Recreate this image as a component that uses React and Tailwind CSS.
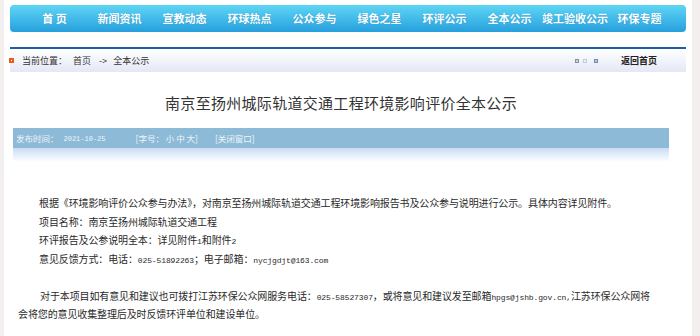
import React from "react";

const cjk = { fontFamily: '"Noto Sans CJK SC", "Noto Sans", sans-serif' };

function A({ children }) {
  return (
    <span className="font-['Liberation_Mono',monospace] text-[8px] leading-none">{children}</span>
  );
}

function Line({ className = "", children }) {
  return <div className={"h-[18.5px] leading-[18.5px] overflow-hidden " + className}>{children}</div>;
}

const navItems = ["首 页", "新闻资讯", "宣教动态", "环球热点", "公众参与", "绿色之星", "环评公示", "全本公示", "竣工验收公示", "环保专题"];

export default function App() {
  return (
    <div className="w-[700px] h-[336px] bg-[#f4efef] overflow-hidden" style={cjk}>
      <div className="ml-[4px] w-[688px] h-full bg-white">
        {/* nav */}
        <div className="pt-[5px] px-[6px]">
          <div className="h-[27px] rounded-[4px] bg-gradient-to-b from-[#5dd6f5] to-[#26a0dd] flex items-center pl-[12px]">
            {navItems.map((t) => (
              <div key={t} className="w-[65px] text-center text-white font-bold text-[11px] whitespace-nowrap [text-shadow:0_0_1px_rgba(0,80,140,0.4)]">
                {t}
              </div>
            ))}
          </div>
        </div>

        {/* breadcrumb */}
        <div className="mt-[15px] mx-[6px] h-[2px] bg-[#1b5ea8]" />
        <div className="mx-[6px] h-[23px] bg-gradient-to-b from-white to-[#e4e8f5] flex items-center text-[9px] text-[#333]">
          <div className="ml-[-1px] w-[5px] h-[5px] bg-[#e6601a] flex items-center justify-center">
            <div className="w-[1px] h-[1px] bg-white" />
          </div>
          <span className="ml-[8px]">当前位置：</span>
          <span className="ml-[6px]">首页</span>
          <span className="ml-[8px]">-&gt;</span>
          <span className="ml-[6px]">全本公示</span>
          <div className="ml-auto flex items-center gap-[4px]">
            <div className="w-[4px] h-[4px] border border-[#8193a8] bg-[#c9d3e0]" />
            <div className="w-[4px] h-[4px] border border-[#c3ccd8] bg-[#eef1f6]" />
            <div className="ml-[3px] w-[4px] h-[4px] border border-[#7a8ca4] bg-[#b9c6d6]" />
          </div>
          <span className="ml-[23px] mr-[29px] font-bold text-[#222]">返回首页</span>
        </div>

        {/* title */}
        <div className="mt-[21px] h-[20px] flex items-center justify-center pr-[14px] text-[15px] text-[#333] whitespace-nowrap tracking-[0.3px]">
          南京至扬州城际轨道交通工程环境影响评价全本公示
        </div>

        {/* info bar */}
        <div className="mt-[15px] ml-[9px] w-[656px]">
          <div className="h-[20px] bg-[#8dbbd7] flex items-center text-[8.5px] text-[#eef4f9] whitespace-nowrap">
            <span className="ml-[3px]">发布时间：</span>
            <span className="ml-[5px] mt-[2px] font-['Liberation_Mono',monospace] text-[7px] leading-none">2021-10-25</span>
            <span className="ml-[30px]">[字号： 小 中 大]</span>
            <span className="ml-[17px]">[关闭窗口]</span>
          </div>
          <div className="h-[14px] bg-gradient-to-b from-[#c9dcf4] to-white" />
        </div>

        {/* body */}
        <div className="mt-[32px] pl-[14px] text-[10px] tracking-[-0.12px] text-[#2a2a2a] whitespace-nowrap">
          <Line className="pl-[21px]">根据《环境影响评价公众参与办法》，对南京至扬州城际轨道交通工程环境影响报告书及公众参与说明进行公示。具体内容详见附件。</Line>
          <Line className="pl-[21px]">项目名称：南京至扬州城际轨道交通工程</Line>
          <Line className="pl-[21px]">环评报告及公参说明全本：详见附件<A>1</A>和附件<A>2</A></Line>
          <Line className="pl-[21px]">意见反馈方式：电话：<A>025-51892263</A>；电子邮箱：<A>nycjgdjt@163.com</A></Line>
          <Line />
          <Line className="pl-[22px]">对于本项目如有意见和建议也可拨打江苏环保公众网服务电话：<A>025-58527307</A>，或将意见和建议发至邮箱<A>hpgs@jshb.gov.cn,</A>江苏环保公众网将</Line>
          <Line>会将您的意见收集整理后及时反馈环评单位和建设单位。</Line>
        </div>
      </div>
    </div>
  );
}
